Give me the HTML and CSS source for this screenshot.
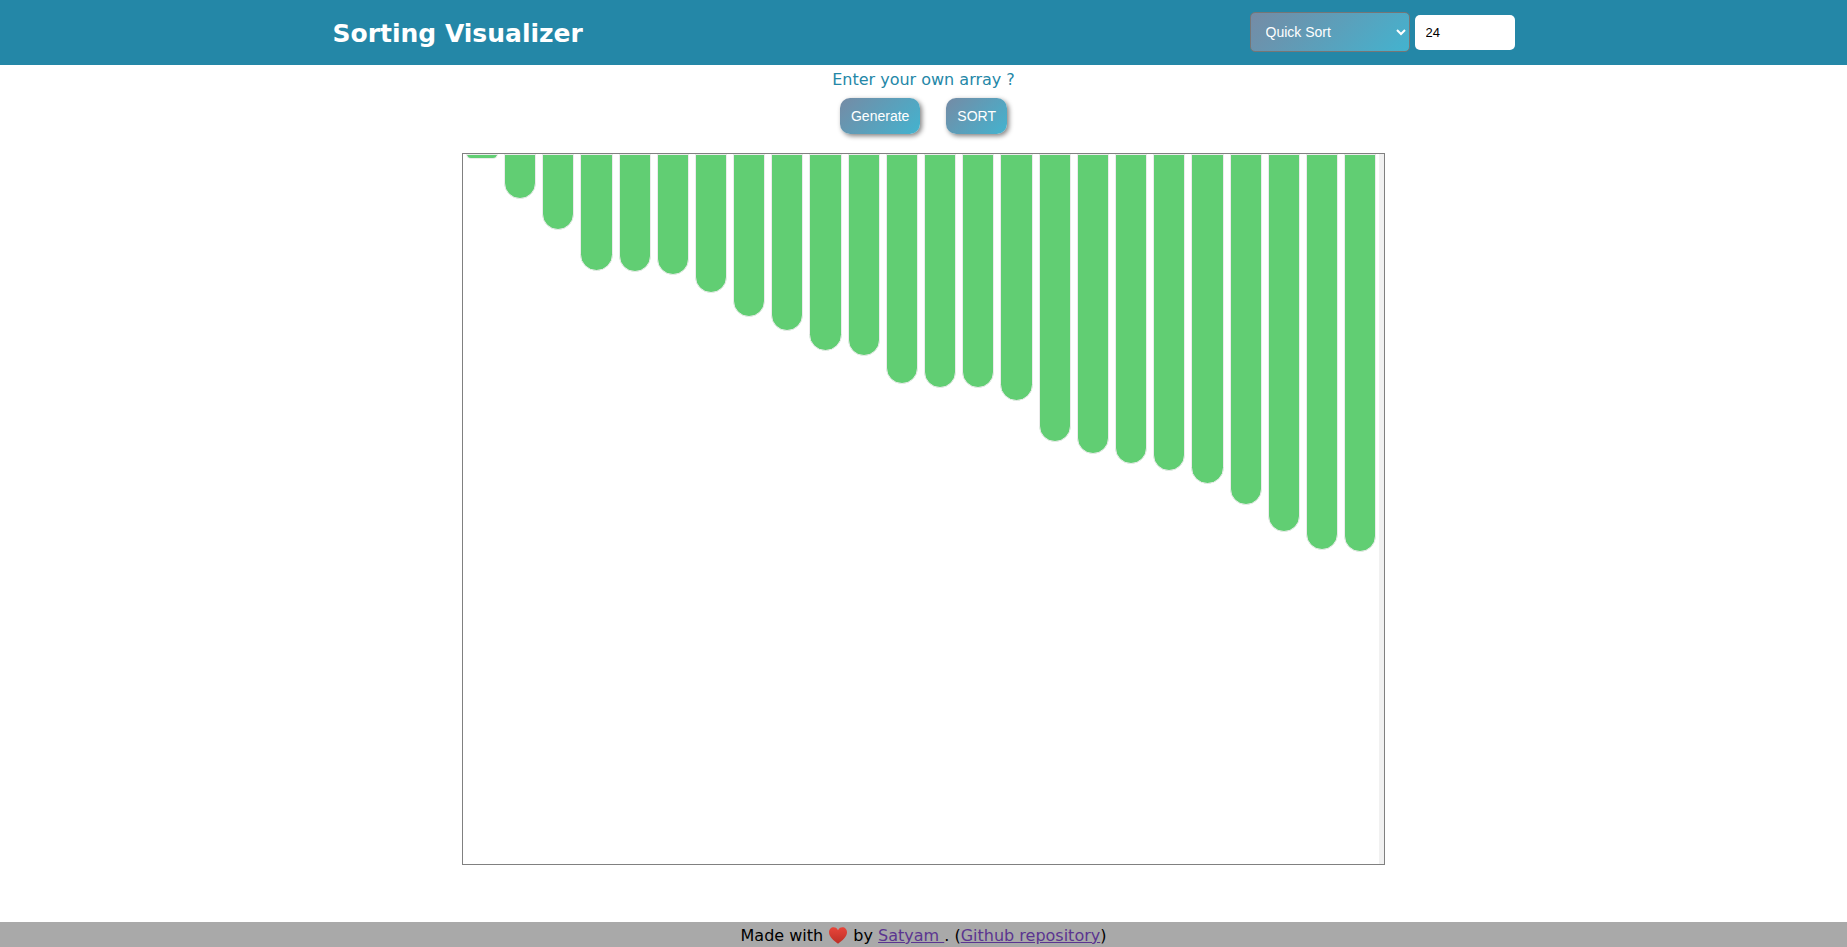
FILE: index.html
```
<!DOCTYPE html>
<html lang="en">
<head>
<meta charset="utf-8">
<title>Sorting Visualizer</title>
<link rel="stylesheet" href="styles.css">
</head>
<body>
<header class="header">
  <h1 class="title">Sorting Visualizer</h1>
  <div class="settings">
    <select class="algorithm" aria-label="Sorting algorithm">
      <option>Quick Sort</option>
      <option>Bubble Sort</option>
      <option>Merge Sort</option>
    </select>
    <input class="size" type="number" value="24" aria-label="Array size">
  </div>
</header>
<main class="main">
  <p class="prompt">Enter your own array ?</p>
  <div class="actions">
    <button class="button" type="button">Generate</button>
    <button class="button" type="button">SORT</button>
  </div>
  <section class="chart" aria-label="Array bars">
    <div class="bars">
      <div class="bar" style="height:5px"></div>
      <div class="bar" style="height:45px"></div>
      <div class="bar" style="height:76px"></div>
      <div class="bar" style="height:117px"></div>
      <div class="bar" style="height:118px"></div>
      <div class="bar" style="height:121px"></div>
      <div class="bar" style="height:139px"></div>
      <div class="bar" style="height:163px"></div>
      <div class="bar" style="height:177px"></div>
      <div class="bar" style="height:197px"></div>
      <div class="bar" style="height:202px"></div>
      <div class="bar" style="height:230px"></div>
      <div class="bar" style="height:234px"></div>
      <div class="bar" style="height:234px"></div>
      <div class="bar" style="height:247px"></div>
      <div class="bar" style="height:288px"></div>
      <div class="bar" style="height:300px"></div>
      <div class="bar" style="height:310px"></div>
      <div class="bar" style="height:317px"></div>
      <div class="bar" style="height:330px"></div>
      <div class="bar" style="height:351px"></div>
      <div class="bar" style="height:378px"></div>
      <div class="bar" style="height:396px"></div>
      <div class="bar" style="height:398px"></div>
    </div>
    <div class="track"></div>
  </section>
</main>
<footer class="footer">
  <span>Made with <svg class="heart" viewBox="0 0 18 17" aria-hidden="true"><defs><linearGradient id="red" x1="0" y1="0" x2="0" y2="1"><stop offset="0" stop-color="#e8453a"/><stop offset="1" stop-color="#bd2f26"/></linearGradient></defs><path fill="url(#red)" d="M9 3.2C7.800.900 6.200.300 4.700.300 2 .300 0 2.400 0 5.300 0 9.700 4.700 13.900 9 16.700 13.300 13.900 18 9.700 18 5.300 18 2.400 16 .300 13.300.300 11.800.300 10.200.900 9 3.200Z"/></svg> by <a class="link" href="#satyam">Satyam&nbsp;</a>. (<a class="link" href="#repository">Github repository</a>)</span>
</footer>
</body>
</html>
```
FILE: styles.css
```
* { box-sizing: border-box; }
body {
  margin: 0;
  min-height: 100vh;
  display: flex;
  flex-direction: column;
  font: 16px/19px "DejaVu Sans", Verdana, sans-serif;
  color: #000;
  background: #fff;
}
.header {
  display: flex;
  justify-content: space-between;
  padding: 12px 18% 9px;
  background: #2487a7;
}
.title {
  margin: 0;
  font-size: 25px;
  line-height: 44px;
  color: #fff;
}
.settings {
  display: flex;
  align-items: center;
  gap: 5px;
  height: 40px;
}
.algorithm,
.size,
.button {
  font-family: "Liberation Sans", Arial, sans-serif;
}
.algorithm,
.button {
  color: #fff;
  font-size: 14px;
  background: linear-gradient(135deg, #758ba5, #43b3cf);
}
.algorithm {
  width: 160px;
  height: 40px;
  padding: 0 0 0 11px;
  border: 1px solid #767676;
  border-radius: 5px;
}
.size {
  width: 100px;
  height: 35px;
  padding: 0 11px;
  font-size: 13px;
  border: 0;
  border-radius: 5px;
  background: #fff;
}
.main {
  flex: 1;
  display: flex;
  flex-direction: column;
  align-items: center;
}
.prompt {
  margin: 5px 0 9px;
  color: #2487a7;
}
.actions {
  display: flex;
  gap: 26px;
  margin-bottom: 19px;
}
.button {
  height: 36px;
  padding: 0 11px;
  border: 0;
  border-radius: 10px;
  box-shadow: 2px 2px 5px #808080;
}
.chart {
  display: flex;
  width: 50%;
  height: 75vh;
  min-height: 712px;
  border: 1px solid #808080;
}
.bars {
  flex: 1;
  display: flex;
  align-items: flex-start;
}
.bar {
  flex: 1;
  margin: 0 3px;
  background: #61ce73;
  border: 1px solid #ebebeb;
  border-radius: 0 0 20px 20px;
}
.track {
  width: 5px;
  background: #f1f1f1;
}
.footer {
  padding: 4px 0 2px;
  text-align: center;
  background: #a9a9a9;
}
.heart {
  width: 18px;
  height: 17px;
  margin: 0 1px;
  vertical-align: -3px;
}
.link { color: #5b3590; }
```
